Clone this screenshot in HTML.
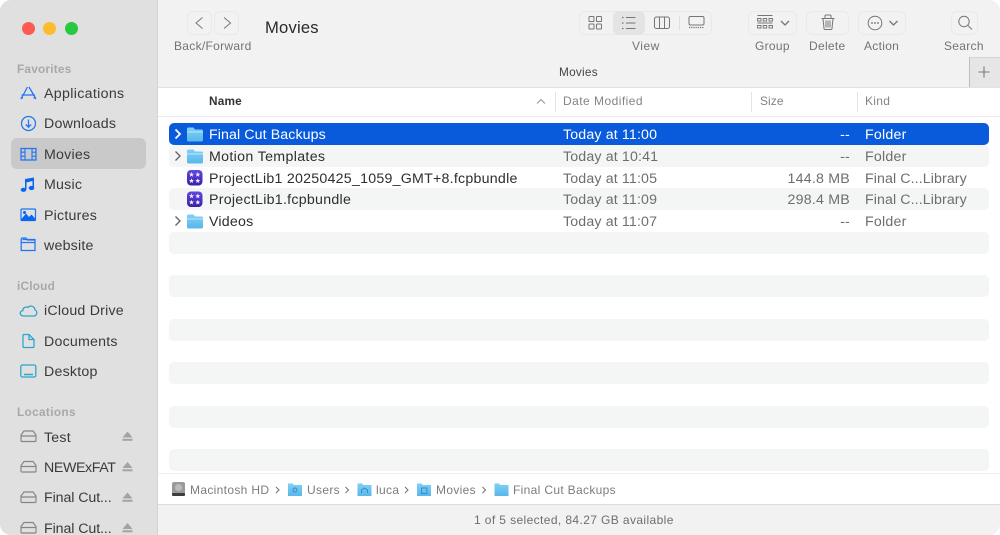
<!DOCTYPE html>
<html><head><meta charset="utf-8"><style>
html,body{margin:0;padding:0;width:1000px;height:535px;overflow:hidden;background:#fff}
body{position:relative;font-family:"Liberation Sans",sans-serif;}
.t{position:absolute;white-space:nowrap;line-height:18px;height:18px}
.a{position:absolute}
svg.a{overflow:visible}
.sb{font-size:14.2px;color:#3a3a3a;letter-spacing:.22px}
.h{font-size:11.8px;font-weight:bold;color:#a8a8a8;letter-spacing:.22px}
.l{font-size:12px;color:#737373;letter-spacing:.3px}
.hd{font-size:12px;color:#848484;letter-spacing:.3px}
.r{font-size:14.2px;color:#2e2e2e;letter-spacing:.22px}
.g{color:#6e6e6e}
.d{letter-spacing:.15px}
.k{letter-spacing:.1px}
.w{color:#fff}
.p{font-size:12px;color:#7c7c7c;letter-spacing:.33px}
.b{position:absolute;border:1px solid #e9e9e9;border-radius:6px;box-sizing:border-box;height:24px;top:11px}
.ic{fill:none;stroke:#2074f2;stroke-width:1.25}
.ic2{fill:none;stroke:#2aa6c8;stroke-width:1.25}
.gr{fill:none;stroke:#858585;stroke-width:1.15}
.tb{fill:none;stroke:#757575;stroke-width:1}
</style></head><body>
<div class="a" style="left:0;top:0;width:1000px;height:535px;background:#f2f2f2;border-radius:11px;overflow:hidden">
<div class="a" style="left:0;top:0;width:157px;height:535px;background:#e0e0e0;border-right:1px solid #d4d4d4"></div>
<div class="a" style="left:11px;top:138px;width:135px;height:31px;background:#c9c9c9;border-radius:6px"></div>
<div class="a" style="left:22px;top:22px;width:13px;height:13px;border-radius:50%;background:#fd5a52"></div>
<div class="a" style="left:43px;top:22px;width:13px;height:13px;border-radius:50%;background:#fdbb2e"></div>
<div class="a" style="left:65px;top:22px;width:13px;height:13px;border-radius:50%;background:#28c840"></div>

<div class="t h" style="left:17px;top:60px">Favorites</div>
<div class="t sb" style="left:44px;top:85px;letter-spacing:.33px">Applications</div>
<div class="t sb" style="left:44px;top:115px">Downloads</div>
<div class="t sb" style="left:44px;top:146px">Movies</div>
<div class="t sb" style="left:44px;top:176px">Music</div>
<div class="t sb" style="left:44px;top:207px">Pictures</div>
<div class="t sb" style="left:44px;top:237px">website</div>
<div class="t h" style="left:17px;top:277px">iCloud</div>
<div class="t sb" style="left:44px;top:302px">iCloud Drive</div>
<div class="t sb" style="left:44px;top:333px">Documents</div>
<div class="t sb" style="left:44px;top:363px">Desktop</div>
<div class="t h" style="left:17px;top:403px;letter-spacing:.35px">Locations</div>
<div class="t sb" style="left:44px;top:429px">Test</div>
<div class="t sb" style="left:44px;top:459px;letter-spacing:-.38px">NEWExFAT</div>
<div class="t sb" style="left:44px;top:489px;letter-spacing:-.08px">Final Cut...</div>
<div class="t sb" style="left:44px;top:520px;letter-spacing:-.08px">Final Cut...</div>

<svg class="a" style="left:0;top:0" width="157" height="535">
<g class="ic">
<path d="M29 87L36 99M27.5 87L21 99M21.5 95H35M23 98H20.5M33.5 98H36"/>
<circle cx="28.500" cy="123.500" r="7"/><path d="M28.500 119.500V127M25.800 124.500L28.500 127.200L31.200 124.500"/>
<rect x="21" y="148.500" width="15" height="11.500"/><path d="M25 148.500V160M32 148.500V160M21 152.200H25M21 156.200H25M32 152.200H36M32 156.200H36" stroke-width="1.1"/>
<rect x="21" y="209" width="14.500" height="11.500" rx="1"/>
<path d="M22.500 239.500H35V250.500H21.200V239.500Q21.200 238 22.500 238H26L27.500 240H35.500M21 242.500H35.500"/>
</g>
<g fill="#0a66f0" stroke="none">
<path d="M25 179V189.500H26.500V182.500L32.500 181V187.500H34V177.500Z"/><ellipse cx="23.500" cy="189.800" rx="2.800" ry="2.100"/><ellipse cx="31.500" cy="188" rx="2.800" ry="2.100"/>
<path d="M21 219.500L26 213.500L29 217L31.500 214.500L35.500 219V221H21Z"/><circle cx="24.500" cy="212.500" r="1.500"/>
</g>
<g class="ic2">
<path d="M24 316H33.500C37 316 38 311.500 35 310C35 306.500 30 304.500 28 307.500C25 306 22.500 308.500 23 310.500C19 311.500 19.500 316 24 316Z"/>
<path d="M24 334.500H29L34 339.500V346.500Q34 347.500 33 347.500H24Q23 347.500 23 346.500V335.500Q23 334.500 24 334.500ZM29 334.500V339.500H34"/>
<rect x="20.800" y="365" width="15" height="12" rx="1.500"/>
<path d="M24 374.500H33" stroke-width="1.500"/>
</g>
<g class="gr">
<path id="d" d="M21 435L24 431H33L36 435V440.500Q36 441.500 35 441.500H22Q21 441.500 21 440.500ZM21 436H36"/>
<path d="M21 465.500L24 461.500H33L36 465.500V471Q36 472 35 472H22Q21 472 21 471ZM21 466.500H36"/>
<path d="M21 496L24 492H33L36 496V501.500Q36 502.500 35 502.500H22Q21 502.500 21 501.500ZM21 497H36"/>
<path d="M21 526.500L24 522.500H33L36 526.500V532Q36 533 35 533H22Q21 533 21 532ZM21 527.500H36"/>
</g>
<g fill="#a3a3a3">
<path d="M127.500 431.500L132.500 437.500H122.500Z"/><rect x="122.500" y="438.800" width="10" height="2"/>
<path d="M127.500 462L132.500 468H122.500Z"/><rect x="122.500" y="469.300" width="10" height="2"/>
<path d="M127.500 492.500L132.500 498.500H122.500Z"/><rect x="122.500" y="499.800" width="10" height="2"/>
<path d="M127.500 523L132.500 529H122.500Z"/><rect x="122.500" y="530.300" width="10" height="2"/>
</g>
</svg>

<div class="b" style="left:187px;width:25px"></div><div class="b" style="left:214px;width:25px"></div>
<svg class="a" style="left:0;top:0" width="1000" height="90">
<path d="M202.500 17.500L196 23L202.500 28.500M224 17.500L230.500 23L224 28.500" fill="none" stroke="#777" stroke-width="1"/>
</svg>
<div class="t l" style="left:174px;top:37px">Back/Forward</div>
<div class="t" style="left:265px;top:19px;font-size:16.600px;color:#2a2a2a;letter-spacing:.2px">Movies</div>

<div class="b" style="left:579px;width:133px"></div>
<div class="a" style="left:613px;top:11px;width:32px;height:24px;background:#e4e4e4;border-radius:6px"></div>
<div class="a" style="left:679px;top:16px;width:1px;height:14px;background:#e0e0e0"></div>
<div class="t l" style="left:632px;top:37px;letter-spacing:.5px">View</div>
<div class="t l" style="left:755px;top:37px">Group</div>
<div class="t l" style="left:809px;top:37px">Delete</div>
<div class="t l" style="left:864px;top:37px">Action</div>
<div class="t l" style="left:944px;top:37px">Search</div>
<div class="b" style="left:748px;width:49px"></div>
<div class="b" style="left:806px;width:43px"></div>
<div class="b" style="left:858px;width:48px"></div>
<div class="b" style="left:951px;width:27px"></div>
<svg class="a" style="left:0;top:0" width="1000" height="90">
<g class="tb">
<rect x="589" y="16.500" width="5" height="5" rx=".8"/><rect x="596.500" y="16.500" width="5" height="5" rx=".8"/><rect x="589" y="24" width="5" height="5" rx=".8"/><rect x="596.500" y="24" width="5" height="5" rx=".8"/>
<path d="M626 17.500H635.500M626 23H635.500M626 28.500H635.500" />
<path d="M622 17.500H623.500M622 23H623.500M622 28.500H623.500" stroke-width="1.200"/>
<rect x="654.500" y="17" width="15" height="11.500" rx="2"/><path d="M659.500 17V28.500M664.500 17V28.500"/>
<rect x="689" y="16.500" width="15" height="8.500" rx="1.500"/>
<path d="M689 27.500H704" stroke-dasharray="1.200 1" stroke-width="1.300"/>
<path d="M757.500 15.500H772.500M757.500 23H772.500" />
<path d="M757.500 18.500h3.500v2.500h-3.500zM763.200 18.500h3.500v2.500h-3.500zM769 18.500h3.500v2.500h-3.500zM757.500 25.500h3.500v2.500h-3.500zM763.200 25.500h3.500v2.500h-3.500zM769 25.500h3.500v2.500h-3.500z" stroke-width=".9"/>
<path d="M781 21L785 25L789 21M889.500 21L893.500 25L897.500 21" stroke-width="1.300"/>
<path d="M821.500 18.500H834.500M825 18V16Q825 15 826 15H830Q831 15 831 16V18M823 18.500L824 28.500Q824 29.500 825 29.500H831Q832 29.500 832 28.500L833 18.500M826 20.500V27.500M828 20.500V27.500M830 20.500V27.500"/>
<circle cx="875" cy="23" r="6.800"/>
<circle cx="964" cy="21.500" r="5.200"/><path d="M967.800 25.300L972 29.500"/>
</g>
<g fill="#6c6c6c"><circle cx="872" cy="23" r=".9"/><circle cx="875" cy="23" r=".9"/><circle cx="878" cy="23" r=".9"/></g>
</svg>

<div class="t" style="left:559px;top:63px;font-size:11.800px;color:#444;letter-spacing:.25px">Movies</div>
<div class="a" style="left:969px;top:57px;width:31px;height:30px;background:#e6e6e6;border-left:1px solid #bdbdbd;border-top:1px solid #d5d5d5;box-sizing:border-box"></div>
<svg class="a" style="left:969px;top:57px" width="31" height="30"><path d="M15 9.500V20.500M9.500 15H20.500" stroke="#7a7a7a" stroke-width="1.100"/></svg>

<div class="a" style="left:158px;top:87px;width:842px;height:386px;background:#fff;border-top:1px solid #e2e2e2;box-sizing:border-box"></div>
<div class="a" style="left:158px;top:116px;width:842px;height:1px;background:#e9e9e9"></div>
<div class="a" style="left:555px;top:92px;width:1px;height:20px;background:#e4e4e4"></div>
<div class="a" style="left:751px;top:92px;width:1px;height:20px;background:#e4e4e4"></div>
<div class="a" style="left:857px;top:92px;width:1px;height:20px;background:#e4e4e4"></div>
<div class="t" style="left:209px;top:92px;font-size:11.800px;font-weight:bold;color:#333;letter-spacing:.2px">Name</div>
<svg class="a" style="left:536px;top:98px" width="10" height="7"><path d="M1 5.500L5 1.500L9 5.500" fill="none" stroke="#9a9a9a" stroke-width="1.100"/></svg>
<div class="t hd" style="left:563px;top:92px;letter-spacing:.46px">Date Modified</div>
<div class="t hd" style="left:760px;top:92px;letter-spacing:.05px">Size</div>
<div class="t hd" style="left:865px;top:92px">Kind</div>

<div class="a" style="left:169px;top:123px;width:820px;height:22px;background:#0a5bdc;border-radius:5px"></div>
<div class="a" style="left:169px;top:145px;width:820px;height:22px;background:#f4f5f5;border-radius:5px"></div>
<div class="a" style="left:169px;top:188px;width:820px;height:22px;background:#f4f5f5;border-radius:5px"></div>
<div class="a" style="left:169px;top:232px;width:820px;height:22px;background:#f4f5f5;border-radius:5px"></div>
<div class="a" style="left:169px;top:275px;width:820px;height:22px;background:#f4f5f5;border-radius:5px"></div>
<div class="a" style="left:169px;top:319px;width:820px;height:22px;background:#f4f5f5;border-radius:5px"></div>
<div class="a" style="left:169px;top:362px;width:820px;height:22px;background:#f4f5f5;border-radius:5px"></div>
<div class="a" style="left:169px;top:406px;width:820px;height:22px;background:#f4f5f5;border-radius:5px"></div>
<div class="a" style="left:169px;top:449px;width:820px;height:22px;background:#f4f5f5;border-radius:5px"></div>

<svg class="a" style="left:0;top:0" width="1000" height="535">
<defs>
<linearGradient id="f" x1="0" y1="0" x2="0" y2="1"><stop offset="0" stop-color="#7fd0f7"/><stop offset="1" stop-color="#58b7ea"/></linearGradient>
<linearGradient id="pv" x1="0" y1="0" x2="0" y2="1"><stop offset="0" stop-color="#5f48e0"/><stop offset="1" stop-color="#3a1fa8"/></linearGradient>
<path id="st" d="M0 -2.500L.7 -.8L2.500 -.8L1.100 .4L1.600 2.200L0 1.200L-1.600 2.200L-1.100 .4L-2.500 -.8L-.7 -.8Z"/>
</defs>
<path d="M175.500 129.500L180 134L175.500 138.500" fill="none" stroke="#fff" stroke-width="1.800"/>
<path d="M175.500 151.500L180 156L175.500 160.500M175.500 216.500L180 221L175.500 225.500" fill="none" stroke="#666" stroke-width="1.400"/>
<g fill="url(#f)">
<path d="M187 129Q187 127.500 188.500 127.500H193.500L195 129.500H201.500Q203 129.500 203 131V140Q203 141.500 201.500 141.500H188.500Q187 141.500 187 140Z"/>
<path d="M187 151Q187 149.500 188.500 149.500H193.500L195 151.500H201.500Q203 151.500 203 153V162Q203 163.500 201.500 163.500H188.500Q187 163.500 187 162Z"/>
<path d="M187 216Q187 214.500 188.500 214.500H193.500L195 216.500H201.500Q203 216.500 203 218V227Q203 228.500 201.500 228.500H188.500Q187 228.500 187 227Z"/>
</g>
<path d="M187 132H203M187 154H203M187 219H203" stroke="#bce8fc" stroke-width="1"/>
<rect x="187" y="170" width="15.500" height="15.500" rx="4" fill="url(#pv)"/>
<rect x="187" y="191.500" width="15.500" height="15.500" rx="4" fill="url(#pv)"/>
<g fill="#f0eeff">
<use href="#st" x="191.500" y="174.500"/><use href="#st" x="197.800" y="174.500"/><use href="#st" x="191.500" y="180.800"/><use href="#st" x="197.800" y="180.800"/>
<use href="#st" x="191.500" y="196"/><use href="#st" x="197.800" y="196"/><use href="#st" x="191.500" y="202.300"/><use href="#st" x="197.800" y="202.300"/>
</g>
</svg>

<div class="t r w" style="left:209px;top:126px;letter-spacing:.1px">Final Cut Backups</div>
<div class="t r" style="left:209px;top:148px;letter-spacing:.34px">Motion Templates</div>
<div class="t r" style="left:209px;top:170px;letter-spacing:.245px">ProjectLib1 20250425_1059_GMT+8.fcpbundle</div>
<div class="t r" style="left:209px;top:191px;letter-spacing:.27px">ProjectLib1.fcpbundle</div>
<div class="t r" style="left:209px;top:213px">Videos</div>
<div class="t r w d" style="left:563px;top:126px">Today at 11:00</div>
<div class="t r g d" style="left:563px;top:148px">Today at 10:41</div>
<div class="t r g d" style="left:563px;top:170px">Today at 11:05</div>
<div class="t r g d" style="left:563px;top:191px">Today at 11:09</div>
<div class="t r g d" style="left:563px;top:213px">Today at 11:07</div>
<div class="t r w" style="right:150px;top:126px">--</div>
<div class="t r g" style="right:150px;top:148px">--</div>
<div class="t r g" style="right:150px;top:170px">144.8 MB</div>
<div class="t r g" style="right:150px;top:191px">298.4 MB</div>
<div class="t r g" style="right:150px;top:213px">--</div>
<div class="t r w" style="left:865px;top:126px">Folder</div>
<div class="t r g" style="left:865px;top:148px">Folder</div>
<div class="t r g k" style="left:865px;top:170px">Final C...Library</div>
<div class="t r g k" style="left:865px;top:191px">Final C...Library</div>
<div class="t r g" style="left:865px;top:213px">Folder</div>

<div class="a" style="left:158px;top:473px;width:842px;height:32px;background:#fff;border-bottom:1px solid #dcdcdc;border-top:1px solid #efefef;box-sizing:border-box"></div>
<svg class="a" style="left:0;top:470px" width="1000" height="40">
<rect x="172" y="12" width="13" height="14" rx="2" fill="#9a9a9a"/><rect x="172" y="23" width="13" height="3" rx="1" fill="#3d3d3d"/><circle cx="178.500" cy="17.500" r="3.500" fill="#bcbcbc"/>
<g fill="url(#f)">
<path d="M288 13.500h4.500l1.500 1.500h8v11h-14z"/>
<path d="M357.500 13.500h4.500l1.500 1.500h8v11h-14z"/>
<path d="M417 13.500h4.500l1.500 1.500h8v11h-14z"/>
<path d="M494.500 13.500h4.500l1.500 1.500h8v11h-14z"/>
</g>
<g fill="none" stroke="#2f88c4" stroke-width=".9"><circle cx="295" cy="20" r="2"/><path d="M361.500 23V20L364.500 18L367.500 20V23"/><rect x="421.500" y="18" width="5.500" height="5.500"/></g>
<path d="M276 17L279 20L276 23M345.500 17L348.500 20L345.500 23M405 17L408 20L405 23M482.500 17L485.500 20L482.500 23" fill="none" stroke="#777" stroke-width="1.100"/>
</svg>
<div class="t p" style="left:190px;top:481px">Macintosh HD</div>
<div class="t p" style="left:307px;top:481px">Users</div>
<div class="t p" style="left:376px;top:481px">luca</div>
<div class="t p" style="left:436px;top:481px">Movies</div>
<div class="t p" style="left:513px;top:481px">Final Cut Backups</div>
<div class="t p" style="left:474px;top:511px;color:#6e6e6e;letter-spacing:.39px">1 of 5 selected, 84.27 GB available</div>
</div>
</body></html>
